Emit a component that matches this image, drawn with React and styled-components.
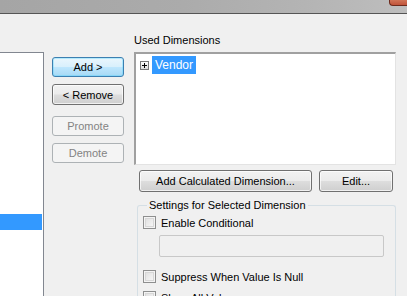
import React from "react";
import styled, { createGlobalStyle, css } from "styled-components";

const Global = createGlobalStyle`
  html, body { margin: 0; padding: 0; }
  body {
    background: #f0f0f0;
    font-family: "Liberation Sans", Arial, sans-serif;
    font-size: 11px;
    color: #000;
    overflow: hidden;
    width: 407px;
    height: 296px;
  }
`;

const Window = styled.div`
  width: 407px;
  height: 296px;
  overflow: hidden;
  background: #f0f0f0;
`;

const TitleBar = styled.div`
  position: relative;
  height: 13px;
  background: linear-gradient(to right, #a5a5a5 0%, #ababab 45%, #b4b4b4 75%, #bebebe 100%);
  border-bottom: 1px solid #555;
`;

const CloseCorner = styled.div`
  position: absolute;
  right: 0;
  top: -2px;
  width: 17px;
  height: 6px;
  background: linear-gradient(#d37a5c, #c0533a);
  border: 1px solid #6d2a1c;
  border-right: none;
  border-radius: 0 0 0 4px;
`;

const Main = styled.div`
  display: grid;
  grid-template-columns: 44px 80px 272px;
  align-items: start;
`;

const LeftList = styled.div`
  margin-top: 38px;
  height: 260px;
  background: #fff;
  border-top: 1px solid #828790;
  border-right: 1px solid #828790;
  box-sizing: border-box;
`;

const LeftSelected = styled.div`
  margin-top: 161px;
  width: 42px;
  height: 16px;
  background: #3399ff;
`;

const ButtonCol = styled.div`
  margin-left: 8px;
  margin-top: 43px;
  display: flex;
  flex-direction: column;
`;

const Btn = styled.button`
  box-sizing: border-box;
  width: ${p => p.$w || 72}px;
  height: ${p => p.$h || 20}px;
  margin-top: ${p => p.$mt || 0}px;
  padding: 0;
  font-family: "Liberation Sans", Arial, sans-serif;
  font-size: 11px;
  color: #000;
  border: 1px solid #707070;
  border-radius: 3px;
  background: linear-gradient(#f2f2f2 0%, #ebebeb 48%, #dddddd 52%, #cfcfcf 100%);
  box-shadow: inset 0 0 0 1px rgba(255,255,255,0.7);
  ${p => p.$default && css`
    border-color: #3c7fb1;
    background: linear-gradient(#eaf6fd 0%, #d9f0fc 48%, #bee6fd 52%, #a7d9f5 100%);
    box-shadow: inset 0 0 0 1px #48d2fc55;
  `}
  ${p => p.disabled && css`
    color: #838383;
    border-color: #adb2b5;
    background: #f4f4f4;
    box-shadow: none;
  `}
`;

const RightCol = styled.div`
  margin-left: 10px;
  display: flex;
  flex-direction: column;
`;

const Label = styled.div`
  margin-top: 20px;
  height: 13px;
  line-height: 13px;
  margin-bottom: 5px;
`;

const TreeBox = styled.div`
  box-sizing: border-box;
  width: 262px;
  height: 113px;
  background: #fff;
  border-top: 2px solid #a0a0a0;
  border-left: 2px solid #a0a0a0;
  border-right: 1px solid #e3e3e3;
  border-bottom: 1px solid #e3e3e3;
  padding: 2px 0 0 4px;
`;

const TreeRow = styled.div`
  display: flex;
  align-items: center;
  height: 18px;
`;

const Expander = styled.div`
  box-sizing: border-box;
  width: 9px;
  height: 9px;
  border: 1px solid #7a7a7a;
  background: linear-gradient(#fff, #dcdcdc);
  position: relative;
  margin-right: 3px;
  &::before {
    content: "";
    position: absolute;
    left: 1px; top: 3px;
    width: 5px; height: 1px;
    background: #000;
  }
  &::after {
    content: "";
    position: absolute;
    left: 3px; top: 1px;
    width: 1px; height: 5px;
    background: #000;
  }
`;

const TreeItem = styled.div`
  height: 18px;
  line-height: 18px;
  padding: 0 3px;
  background: ${p => (p.$selected ? "#3399ff" : "transparent")};
  color: ${p => (p.$selected ? "#fff" : "#000")};
  font-size: 12px;
`;

const ButtonRow = styled.div`
  display: flex;
  gap: 7px;
  margin-top: 5px;
  margin-left: 5px;
`;

const Group = styled.fieldset`
  box-sizing: border-box;
  margin: 7px 0 0 3px;
  width: 259px;
  height: 120px;
  padding: 5px 0 0 5px;
  border: 1px solid #d5dfe5;
  border-radius: 3px;
  border-bottom: none;
`;

const Legend = styled.legend`
  padding: 0 2px;
  margin-left: 4px;
  font-size: 11px;
  line-height: 12px;
`;

const CheckRow = styled.label`
  display: flex;
  align-items: center;
  gap: 5px;
  height: 13px;
  margin-top: ${p => p.$mt || 0}px;
`;

const CheckBox = styled.span`
  box-sizing: border-box;
  width: 13px;
  height: 13px;
  border: 1px solid #8e8f8f;
  background: linear-gradient(135deg, #dcdcdc, #fbfbfb);
  box-shadow: inset 0 0 0 1px #f4f4f4, inset 0 0 0 2px #d7d7d7;
  flex: none;
`;

const TextField = styled.div`
  box-sizing: border-box;
  margin: 6px 0 0 16px;
  width: 225px;
  height: 22px;
  border: 1px solid #c8c8c8;
  border-radius: 2px;
  background: #f0f0f0;
`;

export default function App() {
  return (
    <Window>
      <Global />
      <TitleBar>
        <CloseCorner />
      </TitleBar>
      <Main>
        <LeftList>
          <LeftSelected />
        </LeftList>
        <ButtonCol>
          <Btn $default $h={20}>Add &gt;</Btn>
          <Btn $mt={7} $h={21}>&lt; Remove</Btn>
          <Btn $mt={11} disabled>Promote</Btn>
          <Btn $mt={7} disabled>Demote</Btn>
        </ButtonCol>
        <RightCol>
          <Label>Used Dimensions</Label>
          <TreeBox>
            <TreeRow>
              <Expander />
              <TreeItem $selected>Vendor</TreeItem>
            </TreeRow>
          </TreeBox>
          <ButtonRow>
            <Btn $w={173} $h={22}>Add Calculated Dimension...</Btn>
            <Btn $w={74} $h={22}>Edit...</Btn>
          </ButtonRow>
          <Group>
            <Legend>Settings for Selected Dimension</Legend>
            <CheckRow>
              <CheckBox />
              Enable Conditional
            </CheckRow>
            <TextField />
            <CheckRow $mt={13}>
              <CheckBox />
              Suppress When Value Is Null
            </CheckRow>
            <CheckRow $mt={8}>
              <CheckBox />
              Show All Values
            </CheckRow>
          </Group>
        </RightCol>
      </Main>
    </Window>
  );
}
